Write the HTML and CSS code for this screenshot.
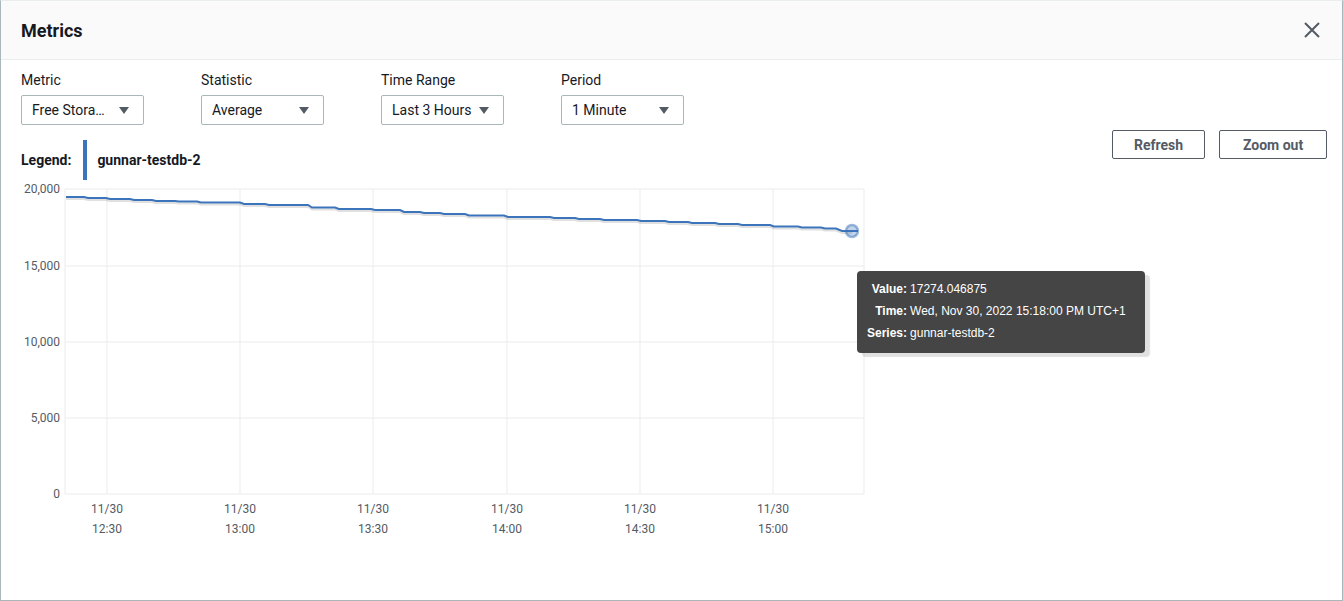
FILE: index.html
```html
<!DOCTYPE html>
<html lang="en">
<head>
    <meta charset="UTF-8">
    <title>Metrics</title>
    <link rel="stylesheet" href="styles.css">
</head>
<body>

<div class="modal">
    <div class="modal-header">
        <h2 class="modal-title">Metrics</h2>
        <button class="close-btn" aria-label="Close">
            <svg width="16" height="16" viewBox="0 0 16 16">
                <path d="M1 1 L15 15 M15 1 L1 15" stroke="#545b64" stroke-width="2" fill="none"/>
            </svg>
        </button>
    </div>

    <div class="modal-body">
        <div class="controls">
            <div class="field">
                <label>Metric</label>
                <div class="select"><span>Free Stora…</span><svg class="caret" width="10" height="7" viewBox="0 0 10 7"><path d="M0 0 H10 L5 7 Z"/></svg></div>
            </div>
            <div class="field">
                <label>Statistic</label>
                <div class="select"><span>Average</span><svg class="caret" width="10" height="7" viewBox="0 0 10 7"><path d="M0 0 H10 L5 7 Z"/></svg></div>
            </div>
            <div class="field">
                <label>Time Range</label>
                <div class="select"><span>Last 3 Hours</span><svg class="caret" width="10" height="7" viewBox="0 0 10 7"><path d="M0 0 H10 L5 7 Z"/></svg></div>
            </div>
            <div class="field">
                <label>Period</label>
                <div class="select"><span>1 Minute</span><svg class="caret" width="10" height="7" viewBox="0 0 10 7"><path d="M0 0 H10 L5 7 Z"/></svg></div>
            </div>
        </div>

        <div class="toolbar">
            <div class="legend">
                <span class="legend-title">Legend:</span>
                <span class="legend-swatch"></span>
                <span class="legend-name">gunnar-testdb-2</span>
            </div>
            <div class="actions">
                <button class="btn btn-refresh">Refresh</button>
                <button class="btn btn-zoom">Zoom out</button>
            </div>
        </div>

        <!-- chart uses page coordinates through the viewBox -->
        <svg class="chart" width="860" height="360" viewBox="21 180 860 360">
            <g class="grid">
                <line x1="65" y1="189" x2="864" y2="189"/>
                <line x1="65" y1="266" x2="864" y2="266"/>
                <line x1="65" y1="342" x2="864" y2="342"/>
                <line x1="65" y1="418" x2="864" y2="418"/>
                <line x1="65" y1="494" x2="864" y2="494"/>
                <line x1="65" y1="189" x2="65" y2="494"/>
                <line x1="107" y1="189" x2="107" y2="494"/>
                <line x1="240" y1="189" x2="240" y2="494"/>
                <line x1="373" y1="189" x2="373" y2="494"/>
                <line x1="507" y1="189" x2="507" y2="494"/>
                <line x1="640" y1="189" x2="640" y2="494"/>
                <line x1="773" y1="189" x2="773" y2="494"/>
                <line x1="864" y1="189" x2="864" y2="494"/>
            </g>
            <g class="y-ticks">
                <text x="60" y="193">20,000</text>
                <text x="60" y="270">15,000</text>
                <text x="60" y="346">10,000</text>
                <text x="60" y="422">5,000</text>
                <text x="60" y="498">0</text>
            </g>
            <g class="x-ticks">
                <text x="107" y="513">11/30</text><text x="107" y="533">12:30</text>
                <text x="240" y="513">11/30</text><text x="240" y="533">13:00</text>
                <text x="373" y="513">11/30</text><text x="373" y="533">13:30</text>
                <text x="507" y="513">11/30</text><text x="507" y="533">14:00</text>
                <text x="640" y="513">11/30</text><text x="640" y="533">14:30</text>
                <text x="773" y="513">11/30</text><text x="773" y="533">15:00</text>
            </g>
            <path class="series-shadow" transform="translate(0 2)" d="M66 197 H84 L88 198 H106 L110 199 H130 L134 200 H152 L156 201 H175 L179 201.5 H197 L201 202.5 H240 L244 204 H265 L269 205 H308 L312 207.5 H335 L339 209 H371 L375 210 H400 L404 212 H420 L424 213 H440 L444 214 H465 L469 215.5 H504 L508 217 H550 L554 218 H575 L579 219 H600 L604 220 H637 L641 221 H665 L669 222 H688 L692 223 H715 L719 224 H738 L742 225 H770 L774 226.5 H798 L802 227.5 H821 L825 228.5 H836 L842 231 H852"/>
            <path class="series" d="M66 197 H84 L88 198 H106 L110 199 H130 L134 200 H152 L156 201 H175 L179 201.5 H197 L201 202.5 H240 L244 204 H265 L269 205 H308 L312 207.5 H335 L339 209 H371 L375 210 H400 L404 212 H420 L424 213 H440 L444 214 H465 L469 215.5 H504 L508 217 H550 L554 218 H575 L579 219 H600 L604 220 H637 L641 221 H665 L669 222 H688 L692 223 H715 L719 224 H738 L742 225 H770 L774 226.5 H798 L802 227.5 H821 L825 228.5 H836 L842 231 H858"/>
            <circle class="marker" cx="852" cy="231" r="6"/>
        </svg>
    </div>

    <div class="tooltip">
        <span class="tip-label">Value:</span><span>17274.046875</span>
        <span class="tip-label">Time:</span><span>Wed, Nov 30, 2022 15:18:00 PM UTC+1</span>
        <span class="tip-label">Series:</span><span>gunnar-testdb-2</span>
    </div>
</div>

</body>
</html>
```

FILE: styles.css
```css
body {
    margin: 0;
    padding: 0;
    background-color: #ffffff;
    font-family: 'Roboto', 'Liberation Sans', sans-serif;
    color: #16191f;
}

.modal {
    position: relative;
    width: 1343px;
    height: 601px;
    box-sizing: border-box;
    border: 1px solid #aab7b8;
    border-top-color: #eaeded;
    background-color: #ffffff;
}

.modal-header {
    display: flex;
    justify-content: space-between;
    align-items: center;
    height: 58px;
    padding: 0 22px 0 20px;
    background-color: #fafafa;
    border-bottom: 1px solid #eaeded;
}

.modal-title {
    margin: 0;
    padding-top: 2px;
    font-size: 18px;
    font-weight: 700;
    line-height: 22px;
}

.close-btn {
    display: flex;
    padding: 0;
    border: none;
    background: none;
    cursor: pointer;
}

.modal-body {
    padding: 10px 15px 0 20px;
}

.controls {
    display: flex;
    gap: 57px;
}

.field label {
    display: block;
    font-size: 14px;
    line-height: 20px;
}

.select {
    display: flex;
    justify-content: space-between;
    align-items: center;
    width: 123px;
    height: 30px;
    box-sizing: border-box;
    margin-top: 5px;
    padding: 0 14px 0 10px;
    border: 1px solid #aab7b8;
    border-radius: 2px;
    font-size: 14px;
}

.caret {
    fill: #545b64;
}

.toolbar {
    display: flex;
    justify-content: space-between;
    align-items: flex-start;
    margin-top: 5px;
}

.legend {
    display: flex;
    align-items: center;
    height: 40px;
    margin-top: 10px;
    font-size: 14px;
    font-weight: 700;
}

.legend-swatch {
    width: 4px;
    height: 40px;
    margin: 0 10px 0 12px;
    background-color: #3b74bb;
}

.actions {
    display: flex;
    gap: 14px;
}

.btn {
    height: 29px;
    padding: 0 20px;
    border: 1px solid #545b64;
    border-radius: 2px;
    background-color: #ffffff;
    color: #545b64;
    font-family: inherit;
    font-size: 14px;
    font-weight: 700;
    cursor: pointer;
}

.btn-refresh {
    width: 93px;
}

.btn-zoom {
    width: 108px;
}

.chart {
    display: block;
}

.grid line {
    stroke: #eaebec;
    stroke-width: 1;
}

.y-ticks text {
    text-anchor: end;
    font-size: 12px;
    fill: #545b64;
}

.x-ticks text {
    text-anchor: middle;
    font-size: 12px;
    fill: #545b64;
}

.series {
    fill: none;
    stroke: #3b74bb;
    stroke-width: 2;
}

.series-shadow {
    fill: none;
    stroke: rgba(0, 0, 0, 0.12);
    stroke-width: 2;
}

.marker {
    fill: rgba(59, 116, 187, 0.3);
    stroke: rgba(59, 116, 187, 0.5);
    stroke-width: 2.5;
}

.tooltip {
    position: absolute;
    left: 856px;
    top: 270px;
    width: 288px;
    height: 82px;
    box-sizing: border-box;
    padding: 7px 10px;
    display: grid;
    grid-template-columns: auto 1fr;
    column-gap: 3px;
    grid-auto-rows: 22px;
    align-items: center;
    background-color: #454545;
    border-radius: 4px;
    box-shadow: 5px 4px 1px rgba(0, 0, 0, 0.12);
    color: #ffffff;
    font-family: 'Liberation Sans', Arial, sans-serif;
    font-size: 12px;
}

.tip-label {
    text-align: right;
    font-weight: 700;
}
```
